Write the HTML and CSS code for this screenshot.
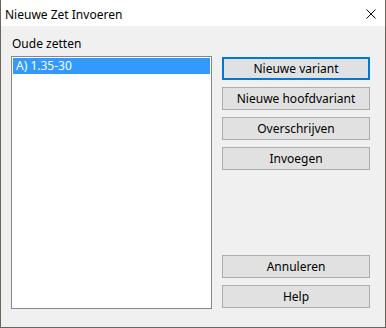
FILE: index.html
```html
<!DOCTYPE html>
<html lang="nl">
<head>
    <meta charset="UTF-8">
    <title>Nieuwe Zet Invoeren</title>
    <link rel="stylesheet" href="styles.css">
</head>
<body>
    <div class="window">
        <div class="titlebar">
            <span class="title">Nieuwe Zet Invoeren</span>
            <div class="close">
                <svg viewBox="0 0 10 10" width="10" height="10">
                    <path d="M0.5 0.5L9.5 9.5M9.5 0.5L0.5 9.5" />
                </svg>
            </div>
        </div>
        <div class="content">
            <div class="left-col">
                <label class="list-label">Oude zetten</label>
                <div class="listbox">
                    <div class="list-item selected">A) 1.35-30</div>
                </div>
            </div>
            <div class="buttons">
                <button class="default">Nieuwe variant</button>
                <button>Nieuwe hoofdvariant</button>
                <button>Overschrijven</button>
                <button>Invoegen</button>
                <button class="push-down">Annuleren</button>
                <button>Help</button>
            </div>
        </div>
    </div>
</body>
</html>
```

FILE: styles.css
```css
* {
    margin: 0;
    padding: 0;
    box-sizing: border-box;
}
body {
    font-family: "Noto Sans", "Liberation Sans", sans-serif;
    font-size: 12px;
    background: #5e5850;
}
.window {
    width: 386px;
    height: 328px;
    background: #f0f0f0;
    border: 1px solid #6a645c;
    border-top: none;
    display: flex;
    flex-direction: column;
}
.titlebar {
    height: 26px;
    background: #fff;
    display: flex;
    align-items: center;
    justify-content: space-between;
    padding: 0 9px 0 4px;
}
.title {
    font-size: 12px;
    color: #000;
    padding-top: 2px;
}
.close {
    width: 10px;
    height: 10px;
    display: flex;
    margin-top: 2px;
}
.close svg {
    stroke: #000;
    stroke-width: 1;
    fill: none;
}
.content {
    flex: 1;
    display: flex;
    gap: 10px;
    padding: 10px 15px 18px 10px;
}
.left-col {
    display: flex;
    flex-direction: column;
}
.list-label {
    line-height: 15px;
    margin-left: 1px;
    margin-bottom: 5px;
    color: #000;
}
.listbox {
    width: 201px;
    height: 253px;
    background: #fff;
    border: 1px solid #828790;
    padding: 1px;
}
.list-item {
    height: 16px;
    line-height: 16px;
    padding-left: 3px;
    color: #000;
}
.list-item.selected {
    background: #3399ff;
    color: #fff;
}
.buttons {
    display: flex;
    flex-direction: column;
    gap: 7px;
    padding: 21px 0 1px;
    width: 148px;
}
.buttons button {
    height: 23px;
    font-family: "Noto Sans", "Liberation Sans", sans-serif;
    font-size: 12px;
    line-height: 15px;
    color: #000;
    background: #e1e1e1;
    border: 1px solid #adadad;
}
.buttons button.default {
    border: 2px solid #0078d7;
}
.buttons .push-down {
    margin-top: auto;
}
```
